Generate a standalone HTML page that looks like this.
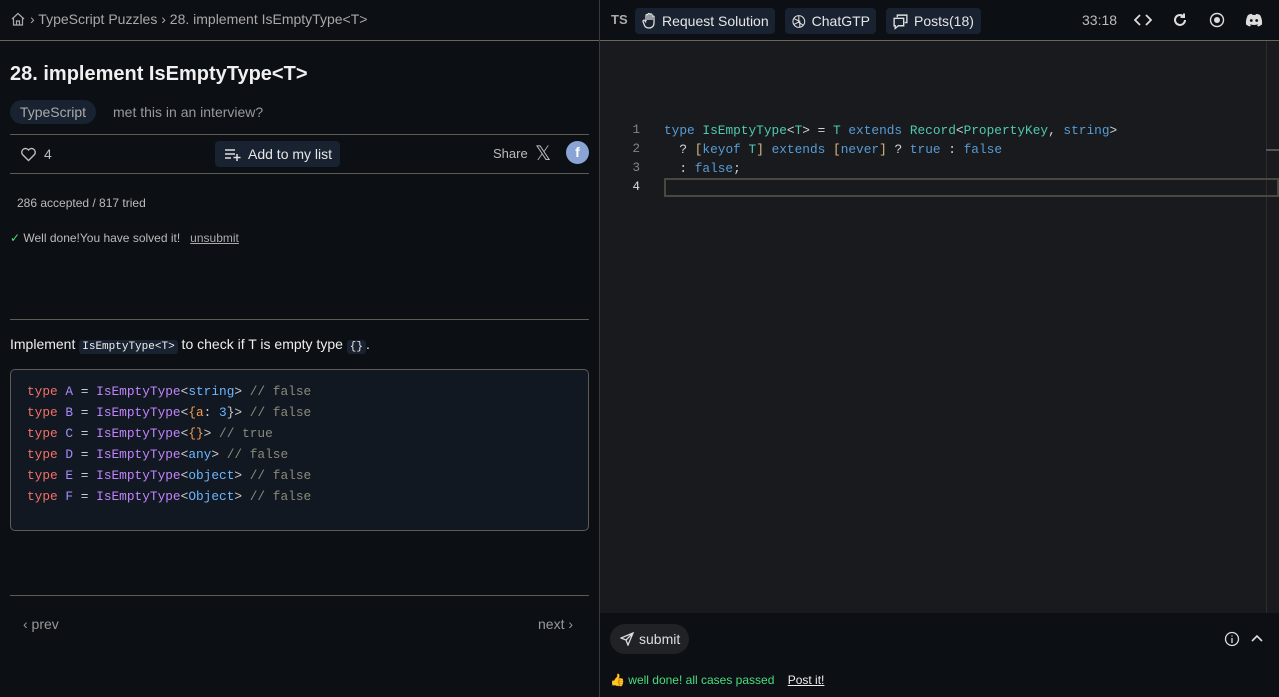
<!DOCTYPE html>
<html><head><meta charset="utf-8"><style>
*{box-sizing:border-box;margin:0;padding:0}
body{width:1279px;height:697px;background:#0c0f14;color:#d6d6d6;font-family:"Liberation Sans",sans-serif;position:relative;overflow:hidden}
.abs{position:absolute}
.mono{font-family:"Liberation Mono","DejaVu Sans Mono",monospace}
.hr{position:absolute;height:1px;background:#5e5b52}
.btn{position:absolute;background:#182230;border-radius:4px;color:#e6e6e6;font-size:14px;display:flex;align-items:center;gap:5px;padding:0 6px}
</style></head><body>
<div class="hr" style="left:0;top:40px;width:1279px;background:#6b6758"></div>
<div class="abs" style="left:599px;top:0;width:1px;height:697px;background:#3a3a3a"></div>
<div class="abs" style="left:10px;top:11px;font-size:14px;color:#a9a9a9;display:flex;align-items:center;gap:4px">
<svg width="16" height="16" viewBox="0 0 16 16" fill="none" stroke="#aaa" stroke-width="1.2"><path d="M2 8L8 2.5 14 8M3.5 6.8V14h9V6.8M6.5 14v-4h3v4"/></svg>
<span>› TypeScript Puzzles › 28. implement IsEmptyType&lt;T&gt;</span></div>

<div class="abs" style="left:611px;top:12px;font-size:13px;font-weight:bold;color:#aaa">TS</div>
<div class="btn" style="left:635px;top:8px;height:26px;width:140px"><svg width="16" height="18" viewBox="0 0 16 18" fill="none" stroke="#ddd" stroke-width="1.3"><path d="M5 9V3.5a1 1 0 012 0V8M7 8V2.5a1 1 0 012 0V8M9 8V3a1 1 0 012 0v5M11 8V5a1 1 0 012 0v6c0 3-2 5-5 5S3.5 14.5 3 12L2 9.5a1 1 0 012-.5l1 1.5"/></svg>Request Solution</div>
<div class="btn" style="left:785px;top:8px;height:26px;width:91px"><svg width="17" height="17" viewBox="0 0 16 16" fill="none" stroke="#ddd" stroke-width="1.1"><circle cx="8" cy="8" r="6"/><path d="M8 2v7l5 3M3 5l6 3M3 11l6-3 0 6"/></svg>ChatGTP</div>
<div class="btn" style="left:886px;top:8px;height:26px;width:95px"><svg width="17" height="17" viewBox="0 0 16 16" fill="none" stroke="#ddd" stroke-width="1.3"><path d="M5 4V2h9v7h-2M2 5h9v7H6l-3 2.5V12H2z"/></svg>Posts(18)</div>
<div class="abs" style="left:1082px;top:12px;font-size:14px;color:#bbb">33:18</div>
<svg class="abs" style="left:1134px;top:14px" width="18" height="12" viewBox="0 0 18 12" fill="none" stroke="#ddd" stroke-width="1.8"><path d="M6 1L1 6l5 5M12 1l5 5-5 5"/></svg>
<svg class="abs" style="left:1172px;top:12px" width="16" height="16" viewBox="0 0 16 16" fill="none" stroke="#ddd" stroke-width="2"><path d="M13 8a5 5 0 11-2-4M12 1.5v3.5H8.5"/></svg>
<svg class="abs" style="left:1209px;top:12px" width="16" height="16" viewBox="0 0 16 16"><circle cx="8" cy="8" r="6.5" fill="none" stroke="#ddd" stroke-width="1.4"/><circle cx="8" cy="8" r="3" fill="#ddd"/></svg>
<svg class="abs" style="left:1245px;top:13px" width="18" height="14" viewBox="0 0 18 14"><path d="M3 2Q6 0.5 7 1L7.5 2Q9 1.7 10.5 2L11 1Q13 .8 15 2Q17.5 6 17 11.5Q15 13 13 13.5L12 12Q13 11.6 13.5 11Q9 13 4.5 11Q5 11.6 6 12L5 13.5Q3 13 1 11.5Q.5 6 3 2Z" fill="#ddd"/><circle cx="6.3" cy="7.5" r="1.4" fill="#0c0f14"/><circle cx="11.7" cy="7.5" r="1.4" fill="#0c0f14"/></svg>

<div class="abs" style="left:10px;top:63px;font-size:20px;font-weight:bold;color:#f0f0f0">28. implement IsEmptyType&lt;T&gt;</div>
<div class="abs" style="left:10px;top:100px;width:86px;height:24px;border-radius:12px;background:#182230;color:#aaa;font-size:14px;line-height:24px;text-align:center">TypeScript</div>
<div class="abs" style="left:113px;top:104px;font-size:14px;color:#999">met this in an interview?</div>
<div class="hr" style="left:10px;top:134px;width:579px"></div>
<svg class="abs" style="left:20px;top:146px" width="17" height="16" viewBox="0 0 17 16" fill="none" stroke="#bbb" stroke-width="1.4"><path d="M8.5 14.5L2.5 8.5a3.5 3.5 0 016-4.5 3.5 3.5 0 016 4.5z"/></svg>
<div class="abs" style="left:44px;top:146px;font-size:14px;color:#bbb">4</div>
<div class="btn" style="left:215px;top:141px;height:26px;width:125px;gap:7px;padding-left:10px"><svg width="16" height="14" viewBox="0 0 16 14" stroke="#ddd" stroke-width="1.5"><path d="M0 3h10M0 7h10M0 11h6M12 7v7M8.5 10.5h7"/></svg>Add to my list</div>
<div class="abs" style="left:493px;top:146px;font-size:13px;color:#bbb">Share</div>
<div class="abs" style="left:535px;top:141px;font-size:20px;color:#bbb">𝕏</div>
<div class="abs" style="left:566px;top:141px;width:23px;height:23px;border-radius:50%;background:#8aa4d6;color:#fff;font-size:14px;font-weight:bold;text-align:center;line-height:23px">f</div>
<div class="hr" style="left:10px;top:173px;width:579px"></div>
<div class="abs" style="left:17px;top:196px;font-size:12px;color:#bbb">286 accepted / 817 tried</div>
<div class="abs" style="left:10px;top:231px;font-size:12px;color:#bbb"><span style="color:#4ade80">✓</span> Well done!You have solved it! &nbsp; <u style="color:#aaa">unsubmit</u></div>
<div class="hr" style="left:10px;top:319px;width:579px"></div>
<div class="abs" style="left:10px;top:336px;font-size:14px;color:#eee">Implement <span class="mono" style="background:#182230;border-radius:3px;padding:1px 3px;font-size:11px">IsEmptyType&lt;T&gt;</span> to check if T is empty type <span class="mono" style="background:#182230;border-radius:3px;padding:1px 3px;font-size:11px">{}</span>.</div>
<div class="abs mono" style="left:10px;top:369px;width:579px;height:162px;border:1px solid #5e5b52;border-radius:5px;background:#121821;padding:11px 16px;font-size:12.8px;line-height:21px;color:#ccc;white-space:pre"><span style="color:#f47067">type</span> <span style="color:#a78bfa">A</span> = <span style="color:#c084fc">IsEmptyType</span>&lt;<span style="color:#6cb6ff">string</span>&gt; <span style="color:#8b8b7a">// false</span>
<span style="color:#f47067">type</span> <span style="color:#a78bfa">B</span> = <span style="color:#c084fc">IsEmptyType</span>&lt;<span style="color:#f69d50">{a</span>: <span style="color:#6cb6ff">3</span>}&gt; <span style="color:#8b8b7a">// false</span>
<span style="color:#f47067">type</span> <span style="color:#a78bfa">C</span> = <span style="color:#c084fc">IsEmptyType</span>&lt;<span style="color:#f69d50">{}</span>&gt; <span style="color:#8b8b7a">// true</span>
<span style="color:#f47067">type</span> <span style="color:#a78bfa">D</span> = <span style="color:#c084fc">IsEmptyType</span>&lt;<span style="color:#6cb6ff">any</span>&gt; <span style="color:#8b8b7a">// false</span>
<span style="color:#f47067">type</span> <span style="color:#a78bfa">E</span> = <span style="color:#c084fc">IsEmptyType</span>&lt;<span style="color:#6cb6ff">object</span>&gt; <span style="color:#8b8b7a">// false</span>
<span style="color:#f47067">type</span> <span style="color:#a78bfa">F</span> = <span style="color:#c084fc">IsEmptyType</span>&lt;<span style="color:#6cb6ff">Object</span>&gt; <span style="color:#8b8b7a">// false</span></div>
<div class="hr" style="left:10px;top:595px;width:579px"></div>
<div class="abs" style="left:23px;top:616px;font-size:14px;color:#999">‹ prev</div>
<div class="abs" style="left:538px;top:616px;font-size:14px;color:#999">next ›</div>

<div class="abs" style="left:600px;top:41px;width:679px;height:572px;background:#191a1d"></div>
<div class="abs" style="left:1266px;top:41px;width:1px;height:572px;background:#2c2c2c"></div>
<div class="abs" style="left:1266px;top:149px;width:13px;height:2px;background:#555"></div>
<div class="abs" style="left:664px;top:178px;width:615px;height:19px;border:2px solid #4a4740"></div>
<div class="abs mono" style="left:620px;top:121px;width:20px;font-size:12.5px;line-height:19px;color:#858585;text-align:right;white-space:pre">1
2
3
<span style="color:#ddd">4</span></div>
<div class="abs mono" style="left:664px;top:121px;font-size:12.8px;line-height:19px;color:#d4d4d4;white-space:pre"><span style="color:#569cd6">type</span> <span style="color:#4ec9b0">IsEmptyType</span>&lt;<span style="color:#4ec9b0">T</span>&gt; = <span style="color:#4ec9b0">T</span> <span style="color:#569cd6">extends</span> <span style="color:#4ec9b0">Record</span>&lt;<span style="color:#4ec9b0">PropertyKey</span>, <span style="color:#569cd6">string</span>&gt;
  ? <span style="color:#d7ba7d">[</span><span style="color:#569cd6">keyof</span> <span style="color:#4ec9b0">T</span><span style="color:#d7ba7d">]</span> <span style="color:#569cd6">extends</span> <span style="color:#d7ba7d">[</span><span style="color:#569cd6">never</span><span style="color:#d7ba7d">]</span> ? <span style="color:#569cd6">true</span> : <span style="color:#569cd6">false</span>
  : <span style="color:#569cd6">false</span>;</div>

<div class="abs" style="left:610px;top:624px;width:79px;height:30px;border-radius:15px;background:#202226;color:#ddd;font-size:14px;display:flex;align-items:center;gap:5px;padding-left:10px"><svg width="14" height="14" viewBox="0 0 14 14" fill="none" stroke="#ddd" stroke-width="1.3"><path d="M13 1L1 6l5 2 2 5zM13 1L6 8"/></svg>submit</div>
<svg class="abs" style="left:1224px;top:631px" width="16" height="16" viewBox="0 0 16 16" fill="none" stroke="#ddd" stroke-width="1.3"><circle cx="8" cy="8" r="6.5"/><path d="M8 7v5M8 4.5v1"/></svg>
<svg class="abs" style="left:1251px;top:634px" width="12" height="10" viewBox="0 0 12 10" fill="none" stroke="#ddd" stroke-width="1.6"><path d="M1 7l5-5 5 5"/></svg>
<div class="abs" style="left:610px;top:673px;font-size:12px;color:#4ade80">👍 well done! all cases passed &nbsp;&nbsp; <u style="color:#eee">Post it!</u></div>
</body></html>
